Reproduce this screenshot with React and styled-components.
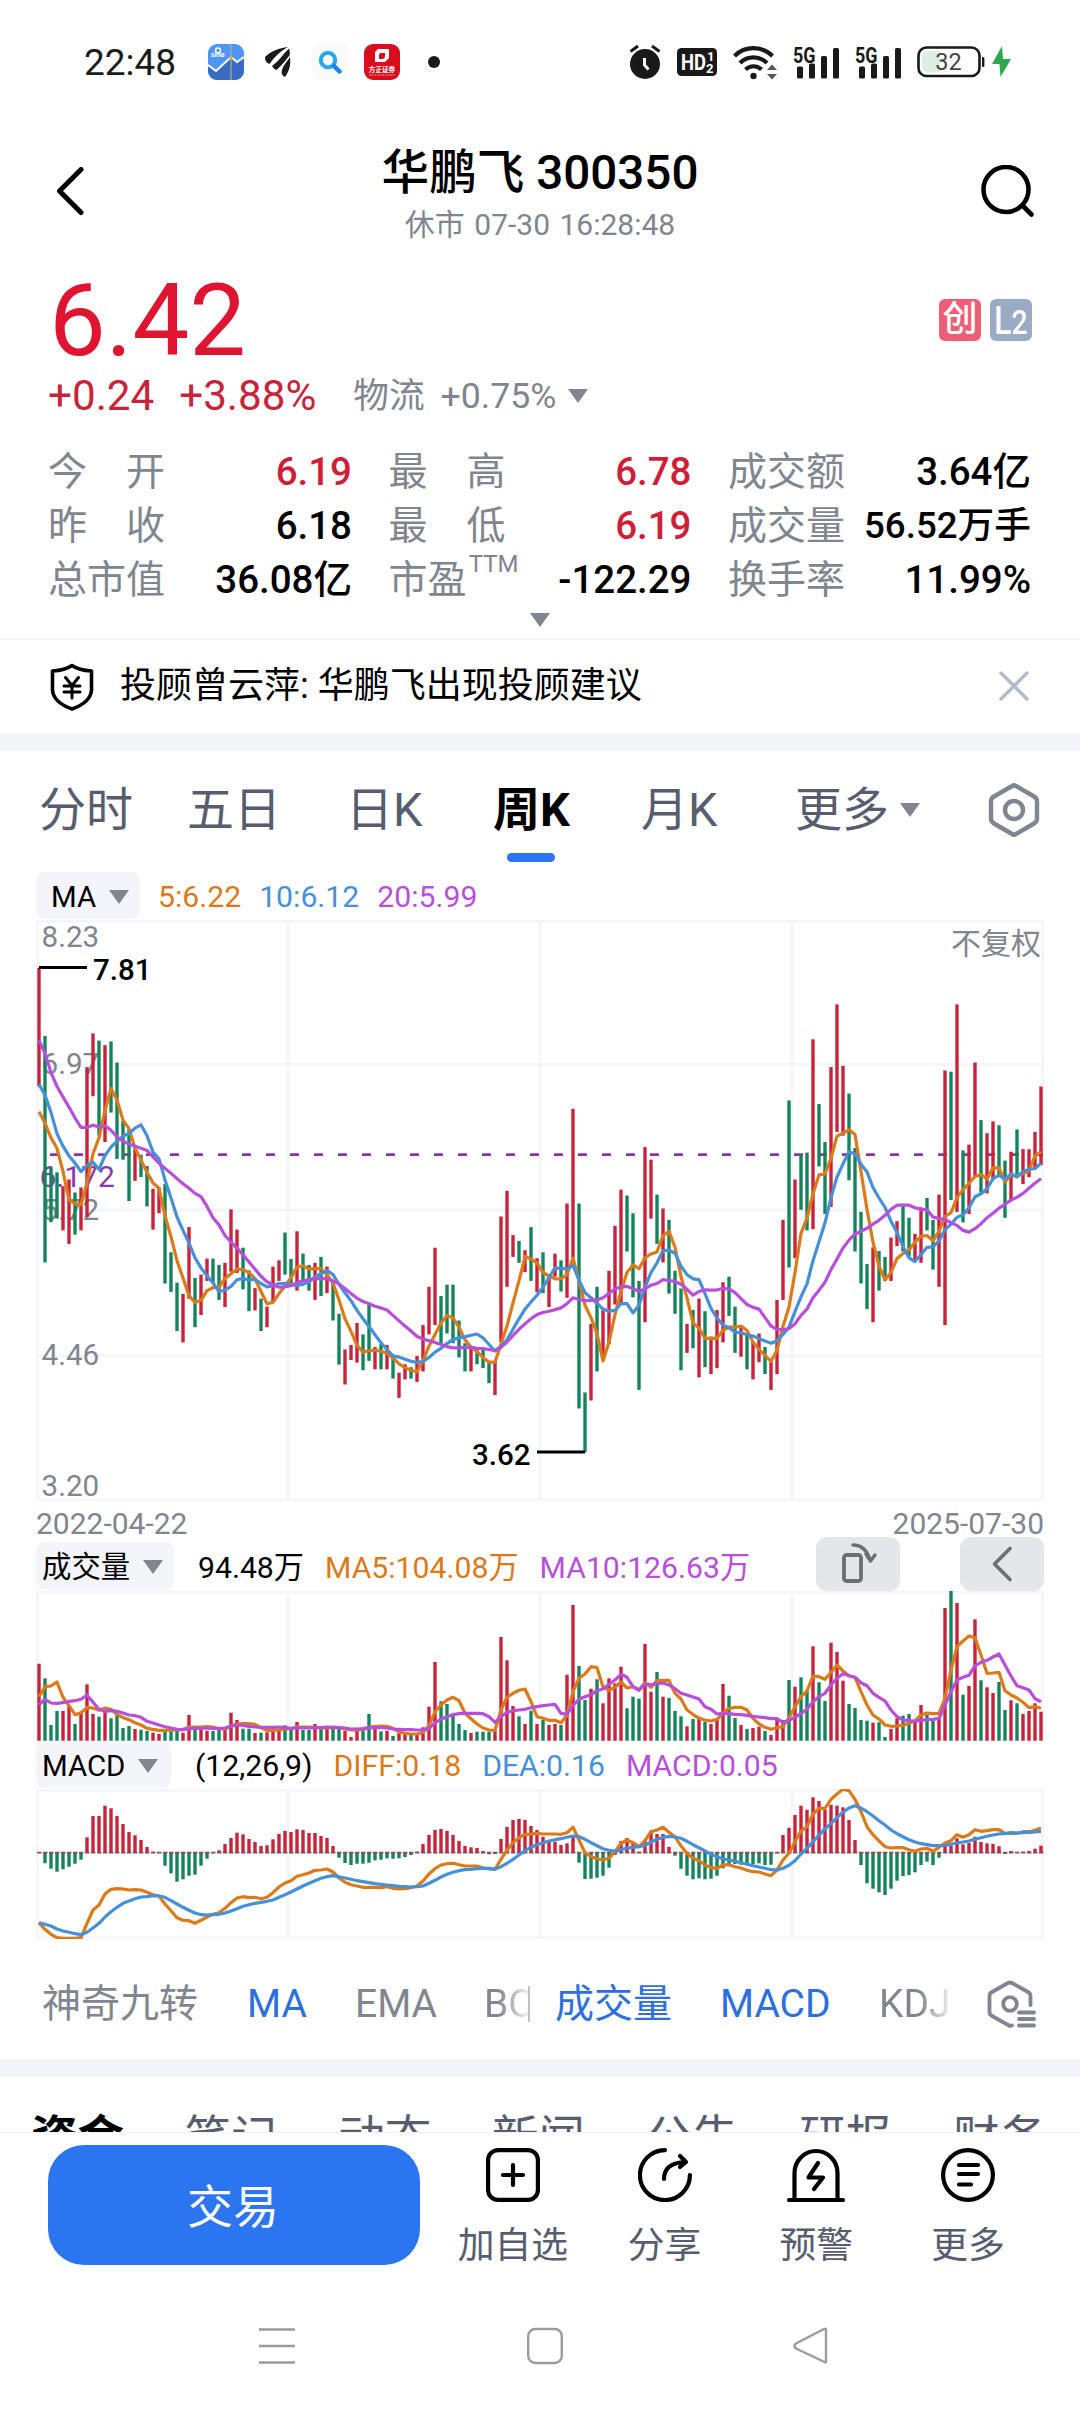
import React from 'react';
import styled, { createGlobalStyle } from 'styled-components';

const GlobalStyle = createGlobalStyle`
  * { box-sizing: border-box; }
  body {
    margin: 0;
    background: #fff;
    font-family: Roboto, "Noto Sans CJK SC", sans-serif;
    color: #000;
  }
  svg { display: block; flex: none; }
`;

const RED = '#c8233a';
const GREEN = '#15835c';
const ORANGE = '#dc7a1a';
const BLUE = '#4590d8';
const PURPLE = '#b84fdc';
const GRAY = '#81858f';
const GRID = '#f4f5f9';

/* ---------- market data ---------- */

const CANDLES = `R256-538 G418-956 G730-860 G742-852 R775-880 R759-912 G790-890 R778-880 R492-848 R412-561
G429-655 R440-670 G431-600 G481-710 G620-712 G640-810 R685-762 G700-753 G727-823 R781-878
R778-839 G770-1006 G932-1026 G1004-1119 R1031-1146 R872-1042 G993-1110 R985-1081 R947-1000 G947-1005
G962-1045 R957-1062 R830-978 R878-981 G921-1020 G975-1072 R1017-1070 G1042-1119 R1061-1110 R966-1050
R951-1000 G885-985 G948-1005 R882-1023 G935-1000 G962-1023 R957-1045 G943-1036 R966-1029 G1000-1094
G1078-1199 R1163-1246 R1152-1188 R1100-1194 G1127-1212 G1056-1190 R1157-1210 G1150-1210 R1152-1210 G1178-1232
R1218-1278 R1198-1234 G1205-1232 R1178-1240 R1105-1215 R1014-1127 R921-1105 G1036-1150 G1009-1125 G1009-1148
G1094-1182 G1148-1215 R1157-1215 G1165-1198 G1160-1207 G1192-1243 R1190-1271 R847-1145 R786-1014 R891-943
G905-957 R927-979 G872-1000 R946-1027 G932-1029 R990-1062 R935-990 G951-1025 R816-1040 R591-945
G816-1303 G1265-1407 R1102-1284 G1014-1215 R1070-1185 R976-1150 R869-1056 R783-1055 G797-930 G839-1039
G1000-1259 R682-1098 R712-852 G795-912 R828-956 G855-1030 G976-1078 G1018-1212 R1102-1171 G1069-1160
R1042-1229 G1072-1205 R1132-1221 R1069-1207 R1003-1146 G990-1083 G1061-1171 R1105-1180 G1125-1210 R1145-1234
R1125-1193 G1157-1221 R1185-1259 R1045-1221 R855-1045 G571-968 R759-946 G700-831 G695-880 R426-877
G580-728 G670-841 R492-824 R343-646 R489-655 G555-761 G684-930 G836-1006 G960-1067 R920-1098
G929-1023 G943-1000 R897-1000 R858-917 G822-930 G850-942 R888-953 R825-957 G803-880 G855-973
R795-1014 R500-1105 G503-808 R343-836 G690-861 R676-841 R481-752 G618-790 R649-792 R621-760
G630-750 G714-850 R693-808 G640-752 R687-770 R687-753 R646-735 R538-725`
  .split(/\s+/)
  .map((s) => {
    const [top, bottom] = s.slice(1).split('-').map(Number);
    return { color: s[0] === 'R' ? RED : GREEN, top, bottom };
  });

const nums = (s) => s.trim().split(/\s+/).map(Number);

const MA5 = nums(`598 625 660 685 740 808 816 819 768 698 660 595 543 570 618 638 684 713 742 767
780 845 895 952 993 1035 1051 1046 1023 1016 1015 994 983 972 973 980 995 1025 1054 1051
1030 1012 992 967 964 972 971 971 985 1005 1045 1090 1120 1153 1169 1166 1164 1167 1172 1183
1197 1206 1212 1216 1190 1155 1127 1100 1082 1088 1110 1140 1157 1168 1182 1193 1193 1150 1107 1052
1000 942 948 957 980 988 995 995 985 946 1000 1058 1087 1125 1190 1145 1080 1025 980 962
971 945 936 931 892 882 920 990 1040 1100 1112 1136 1137 1136 1117 1110 1110 1107 1118 1145
1163 1177 1191 1165 1108 1062 980 887 850 793 748 746 708 656 649 641 652 740 830 908
965 998 980 947 935 926 908 894 892 905 882 847 838 802 783 768 752 747 758 732
731 765 748 750 745 738 703 693`);

const MA10 = nums(`533 558 600 650 680 703 720 740 726 718 735 702 682 668 656 650 637 629 655 694
710 760 803 848 880 910 945 969 988 1005 1025 1022 1013 997 994 998 996 1006 1014 1012
1006 1006 1009 1011 1008 1002 990 983 975 985 1008 1028 1047 1070 1090 1108 1128 1147 1163 1178
1181 1186 1191 1194 1191 1182 1169 1160 1149 1139 1135 1133 1129 1126 1135 1151 1166 1155 1140 1115
1090 1067 1050 1034 1015 992 969 971 971 963 998 1028 1040 1053 1067 1072 1070 1054 1054 1076
1058 1015 980 957 928 927 934 965 985 995 997 1030 1065 1088 1105 1111 1122 1123 1128 1131
1137 1143 1148 1142 1127 1110 1073 1038 1007 952 907 862 802 753 722 693 698 723 741 778
803 825 858 885 918 945 954 937 920 919 905 878 865 849 843 826 800 793 781 757
749 758 746 753 740 735 733 720`);

const MA20 = nums(`428 460 505 538 563 587 613 635 635 630 634 631 642 658 668 675 680 685 690 705
720 733 744 757 769 780 792 800 823 850 867 892 908 922 938 955 972 989 1002 1009
1015 1014 1011 1004 1000 997 995 994 995 1000 1007 1018 1030 1041 1049 1054 1060 1064 1069 1082
1095 1107 1119 1132 1138 1142 1146 1151 1156 1159 1159 1158 1158 1160 1161 1163 1166 1158 1145 1130
1115 1102 1090 1080 1075 1072 1068 1064 1054 1040 1044 1047 1046 1045 1040 1030 1019 1014 1013 1018
1025 1019 1010 1006 997 999 1001 1008 1020 1034 1025 1021 1022 1021 1018 1019 1028 1042 1056 1063
1067 1087 1107 1115 1116 1113 1102 1082 1067 1040 1022 1003 973 948 922 903 889 882 875 865
856 844 830 820 820 820 826 830 831 848 852 853 862 868 880 884 876 864 850 839
827 818 808 801 792 780 768 757`);

const VOLUME = nums(`491 535 675 633 633 615 672 640 553 642 650 630 655 645 684 678 687 689 693 698
702 688 690 692 698 645 688 690 692 693 690 690 638 660 686 686 699 698 697 688
687 676 690 666 690 690 672 680 686 682 684 692 711 692 690 642 683 694 692 708
700 700 704 700 682 620 486 604 612 640 672 690 699 695 695 695 694 411 481 618
649 672 632 672 660 675 672 675 524 315 498 600 566 538 610 535 550 500 625 590
596 432 575 516 590 594 633 649 679 657 650 665 672 655 552 587 654 675 687 684
680 693 705 655 660 540 560 532 573 439 547 603 428 456 542 612 624 660 662 668
667 711 687 655 647 642 665 615 645 662 655 324 273 309 584 558 358 541 562 579
546 630 601 610 642 633 610 635`);

const VOL_MA5 = nums(`590 560 558 546 592 617 644 638 623 624 631 624 628 643 653 659 668 675 685 688
691 691 690 690 688 682 681 681 680 681 687 687 678 672 671 671 673 683 691 691
690 687 686 681 681 681 682 684 684 682 683 687 690 690 689 682 680 678 679 685
696 700 702 702 697 677 636 615 600 592 602 640 656 672 684 690 691 630 592 580
571 567 605 650 655 661 661 668 645 575 535 522 500 503 560 571 562 546 564 560
570 548 562 542 541 541 580 597 630 643 655 660 663 658 640 625 622 622 630 655
672 682 688 683 680 653 620 590 573 528 530 538 517 495 513 527 532 575 615 645
657 675 679 678 676 670 662 645 639 641 641 595 510 440 423 408 413 465 520 519
517 572 585 594 607 623 620 625`);

const VOL_MA10 = nums(`614 598 609 610 608 604 602 598 585 607 628 634 632 634 639 645 647 652 664 669
675 680 684 688 689 686 685 685 684 685 685 684 679 675 676 679 681 682 682 682
681 683 685 684 684 684 683 683 681 682 683 684 687 687 686 683 682 683 684 687
688 689 689 690 690 686 668 658 650 644 641 640 640 640 641 650 667 650 637 632
630 628 623 620 617 615 613 640 643 616 598 590 584 572 567 553 540 523 532 560
570 552 554 551 549 555 566 580 585 591 597 620 628 642 640 641 643 644 646 649
651 653 656 656 668 661 652 640 628 605 590 580 555 535 521 527 532 548 557 580
592 603 630 650 660 662 664 661 659 658 655 615 575 540 532 526 497 487 481 471
462 495 528 557 563 570 596 605`);

const MACD = nums(`1056 1090 1106 1115 1108 1100 1091 1079 1012 948 948 917 925 948 972 996 1006 1020 1041 1055
1057 1097 1120 1145 1138 1127 1124 1097 1076 1058 1051 1032 1014 998 1003 1017 1026 1038 1036 1018
1002 993 996 988 990 999 999 1008 1014 1038 1073 1089 1095 1091 1091 1088 1081 1079 1075 1076
1075 1071 1065 1055 1032 1005 990 987 993 1005 1023 1038 1042 1044 1053 1063 1062 1017 981 960
957 960 978 990 1010 1020 1025 1035 1030 1008 1088 1137 1136 1133 1127 1103 1065 1023 1014 1030
1055 1020 992 1002 1002 1041 1067 1106 1127 1138 1135 1138 1136 1127 1105 1095 1092 1094 1094 1092
1090 1095 1094 1060 1005 983 945 917 929 892 903 930 914 917 922 960 1020 1095 1150 1166
1177 1185 1166 1142 1128 1125 1117 1095 1085 1095 1073 1038 1037 1015 1033 1029 1010 1026 1030 1032
1039 1062 1053 1058 1055 1053 1046 1037`);

const DIFF = nums(`1268 1288 1303 1313 1315 1315 1315 1313 1270 1230 1215 1182 1168 1166 1167 1170 1169 1170 1177 1184
1188 1212 1232 1253 1261 1262 1270 1261 1251 1243 1238 1225 1208 1194 1190 1193 1192 1196 1192 1178
1161 1149 1142 1129 1124 1119 1111 1110 1107 1116 1134 1147 1154 1158 1162 1162 1162 1163 1160 1165
1167 1166 1163 1158 1143 1122 1106 1095 1091 1090 1094 1098 1098 1098 1103 1107 1108 1078 1050 1028
1013 1003 1002 1000 1002 1002 1002 1003 998 982 1020 1058 1070 1076 1080 1075 1055 1030 1020 1028
1040 1022 995 990 982 997 1010 1038 1060 1075 1082 1095 1103 1105 1095 1094 1100 1104 1111 1115
1116 1122 1127 1110 1080 1060 1025 993 980 942 925 925 898 882 868 872 898 935 980 1004
1023 1040 1044 1043 1043 1049 1054 1047 1045 1054 1042 1029 1022 1004 1012 1004 989 994 992 989
989 1001 997 1000 995 995 991 984`);

const DEA = nums(`1268 1273 1278 1287 1293 1297 1301 1304 1297 1284 1270 1251 1235 1222 1210 1203 1196 1191 1190 1187
1188 1192 1202 1212 1222 1231 1239 1244 1245 1244 1243 1239 1233 1226 1219 1214 1210 1207 1204 1200
1192 1184 1176 1167 1158 1150 1142 1135 1130 1127 1130 1134 1138 1142 1145 1148 1151 1153 1155 1157
1159 1160 1161 1160 1158 1150 1141 1131 1123 1117 1112 1109 1108 1106 1105 1105 1107 1100 1090 1078
1065 1052 1042 1034 1028 1023 1019 1016 1012 1008 1010 1018 1028 1037 1046 1051 1053 1049 1044 1042
1040 1036 1026 1018 1012 1009 1011 1015 1024 1034 1043 1053 1063 1070 1077 1080 1084 1088 1093 1097
1101 1105 1109 1110 1105 1096 1082 1062 1045 1025 1005 987 970 953 937 924 917 924 935 948
962 975 990 1001 1010 1019 1026 1031 1034 1037 1037 1036 1033 1029 1026 1023 1018 1013 1009 1005
1002 1000 1000 999 998 997 996 994`);

/* Sample units to chart pixels, one scale for each pane. */
const priceY = (v) => (v - 142.5) / 2.3758;
const volumeY = (v) => (v - 273) / 3;
const macdY = (v) => (v - 867) / 3;
const barX = (i) => 3 + i * 6;

const points = (values, toY) =>
  values.map((v, i) => `${barX(i)},${toY(v).toFixed(1)}`).join(' ');

/* ---------- shared pieces ---------- */

const Screen = styled.div`
  width: 1080px;
  height: 2412px;
  overflow: hidden;
  display: flex;
  flex-direction: column;
  background: #fff;
`;

const Band = styled.div`
  flex: none;
  height: 18px;
  background: #f4f5fa;
`;

const Caret = styled.i`
  flex: none;
  width: 0;
  height: 0;
  margin-left: ${(p) => p.$gap || 0}px;
  border-left: 10.5px solid transparent;
  border-right: 10.5px solid transparent;
  border-top: 14px solid #81858f;
`;

/* ---------- status bar ---------- */

const StatusBar = styled.div`
  flex: none;
  height: 124px;
  padding: 0 67px 0 84px;
  display: flex;
  align-items: center;
  justify-content: space-between;
`;

const StatusGroup = styled.div`
  display: flex;
  align-items: center;
  gap: ${(p) => p.$gap}px;
`;

const Clock = styled.span`
  width: 103px;
  font-size: 37px;
  line-height: 40px;
  color: #1c1c1c;
  padding-top: 2px;
`;

const StockAppIcon = () => (
  <svg width="36" height="36" viewBox="0 0 36 36">
    <defs><clipPath id="stk"><rect width="36" height="36" rx="9" /></clipPath></defs>
    <g clipPath="url(#stk)">
      <rect width="36" height="36" fill="#5096f8" />
      <path d="M0 21l8 6 15-14 6 6 7-6v23H0z" fill="#386bc1" />
      <path d="M0 21l8 6 15-14 6 5 7-5" fill="none" stroke="#fff" strokeWidth="2" />
      <path d="M23 0v36" stroke="#b8a985" strokeWidth="1.2" />
      <circle cx="23" cy="14" r="1.8" fill="#f0a030" />
      <circle cx="10" cy="6.500" r="2.500" fill="none" stroke="#fff" strokeWidth="1.500" />
      <text x="3" y="13" fontSize="7.500" fontWeight="700" fontStyle="italic" fill="#fff">sina</text>
    </g>
  </svg>
);

const WingIcon = () => (
  <svg width="26" height="30" viewBox="0 0 26 30" fill="#191919">
    <path d="M0 10C6 4 14 1 23 0 16 4 10 9 4.500 17 2 16 0 14 0 10z" />
    <path d="M7 19C14 14 18 7 24 1.500c1 3 1 5 .5 7-4 5-8 10-13 14.500-2-1-3.500-2-4.500-4z" />
    <path d="M16.500 25.500c1-7 5-10 8.500-15.500 1 7-.5 14-5 20-2-1-3-2.500-3.500-4.500z" />
  </svg>
);

const FinderIcon = () => (
  <svg width="36" height="36" viewBox="0 0 36 36">
    <rect width="36" height="36" rx="8" fill="#fafafa" />
    <circle cx="16" cy="16" r="7.200" fill="none" stroke="#23a7ee" strokeWidth="4" />
    <path d="M22 22l5.500 5.500" stroke="#1b82ee" strokeWidth="4.500" strokeLinecap="round" />
  </svg>
);

const BrokerIcon = () => (
  <svg width="36" height="36" viewBox="0 0 36 36">
    <rect width="36" height="36" rx="9" fill="#d90d1c" />
    <path d="M14 5h11v9l-4 4H11V8z" fill="#fff" />
    <path d="M16 9h5v4l-2 2h-4v-4z" fill="#d90d1c" />
    <text x="18" y="28" fontSize="6.600" fontWeight="700" textAnchor="middle" fill="#fff">方正证券</text>
    <path d="M5 31h26" stroke="#f08a90" strokeWidth="1.200" strokeDasharray="2 .6" />
  </svg>
);

const AlarmIcon = () => (
  <svg width="32" height="36" viewBox="0 0 32 36">
    <circle cx="16" cy="20" r="15" fill="#191919" />
    <path d="M1.500 7.500L9 2M30.500 7.500L23 2" stroke="#191919" strokeWidth="3" />
    <path d="M15.500 14v7l4 4.500" fill="none" stroke="#fff" strokeWidth="3" />
  </svg>
);

const HdIcon = () => (
  <svg width="40" height="28" viewBox="0 0 40 28">
    <rect width="40" height="28" rx="4.500" fill="#191919" />
    <g fill="#fff" fontWeight="700">
      <text x="4" y="22" fontSize="22" textLength="25" lengthAdjust="spacingAndGlyphs">HD</text>
      <text x="30" y="13" fontSize="13">1</text>
      <text x="29" y="25" fontSize="13">2</text>
    </g>
  </svg>
);

const WifiIcon = () => (
  <svg width="44" height="35" viewBox="0 0 44 35">
    <g fill="none" stroke="#191919" strokeWidth="4.200">
      <path d="M1.500 11a27 27 0 0 1 38 0" />
      <path d="M7 18a19 19 0 0 1 27 0" />
      <path d="M12.500 24.500a11.500 11.500 0 0 1 16 0" />
    </g>
    <circle cx="20.500" cy="31" r="3.200" fill="#191919" />
    <path d="M34 25l5-5.500 5 5.500zM34 29l5 5.500 5-5.500z" fill="#555" />
  </svg>
);

const SignalIcon = () => (
  <svg width="46" height="41" viewBox="0 -4 46 41" fill="#191919">
    <text x="0" y="16.500" fontSize="21.500" fontWeight="700" textLength="22.500" lengthAdjust="spacingAndGlyphs">5G</text>
    <rect x="4" y="20.500" width="6" height="12" rx="1.500" />
    <rect x="16" y="17.500" width="6" height="15" rx="1.500" />
    <rect x="28" y="10" width="6" height="22.500" rx="1.500" />
    <rect x="40" y="2" width="6" height="30.500" rx="1.500" />
  </svg>
);

const BatteryIcon = () => (
  <svg width="96" height="32" viewBox="0 0 96 32">
    <rect x="1.500" y="1.500" width="61" height="28.500" rx="8" fill="#fff" stroke="#191919" strokeWidth="2.600" />
    <path d="M11 5h12v21.500H11a6 6 0 0 1-6-6v-9.500a6 6 0 0 1 6-6z" fill="#dcefe1" />
    <rect x="65" y="11" width="2.400" height="10" rx="1" fill="#191919" />
    <text x="31.500" y="24.300" fontSize="23.500" textAnchor="middle" fill="#444">32</text>
    <path d="M85 0L75 18h7.500l1 13L94 13h-8z" fill="#2fa84a" />
  </svg>
);

/* ---------- header ---------- */

const Header = styled.header`
  flex: none;
  height: 136px;
  padding: 0 45px 0 55px;
  display: grid;
  grid-template-columns: 54px 1fr 54px;
  align-items: center;
`;

const Heading = styled.div`
  text-align: center;
  padding: 6px 10px 0 0;
`;

const Title = styled.h1`
  margin: 0;
  font-size: 47.600px;
  line-height: 56px;
  font-weight: 500;
`;

const Subtitle = styled.div`
  font-size: 30px;
  line-height: 40px;
  margin-top: 4px;
  color: #81858f;
  word-spacing: 2px;
`;

/* ---------- quote ---------- */

const Quote = styled.section`
  flex: none;
  height: 378px;
  padding: 0 48px;
`;

const PriceRow = styled.div`
  height: 110px;
  display: flex;
  align-items: center;
  justify-content: space-between;
`;

const Price = styled.span`
  margin: 12px 0 0 1px;
  font-size: 101px;
  line-height: 100px;
  color: #de1430;
`;

const Badges = styled.div`
  display: flex;
  gap: 9px;
  margin-top: 10px;
`;

const Badge = styled.span`
  width: 42px;
  height: 42px;
  border-radius: 6px;
  background: ${(p) => p.$bg};
  color: #fff;
  font-size: ${(p) => p.$size}px;
  font-weight: 500;
  line-height: ${(p) => p.$line || 40}px;
  display: flex;
  justify-content: center;
`;

const Narrow = styled.span`
  transform: scaleX(0.84);
  small { font-size: 34px; }
`;

const ChangeRow = styled.div`
  height: 52px;
  display: flex;
  align-items: center;
  line-height: 52px;
`;

const Change = styled.span`
  font-size: 42.200px;
  color: #c8233a;
  margin-right: ${(p) => p.$gap}px;
`;

const Sector = styled.span`
  font-size: 35.700px;
  color: #81858f;
  word-spacing: 7px;
  display: flex;
  align-items: center;
`;

const Stats = styled.dl`
  margin: 23px 0 0;
  display: grid;
  grid-template-columns: 304px 303px 303px;
  column-gap: 36.500px;
  grid-auto-rows: 54px;
`;

const Stat = styled.div`
  display: flex;
  justify-content: space-between;
  align-items: center;
  white-space: nowrap;
`;

const StatLabel = styled.dt`
  width: 117px;
  display: flex;
  justify-content: space-between;
  font-size: 39px;
  line-height: 54px;
  color: #81858f;
  sup {
    font-size: 24px;
    line-height: 24px;
    margin: -1px -13px 0 0;
  }
`;

const StatValue = styled.dd`
  margin: 0;
  font-size: ${(p) => (p.$long ? 36.700 : 38.500)}px;
  line-height: 54px;
  font-weight: 500;
  color: ${(p) => (p.$up ? '#d01e38' : '#000')};
`;

const ExpandRow = styled.div`
  display: flex;
  justify-content: center;
  margin-top: 6px;
`;

/* ---------- notice ---------- */

const Notice = styled.section`
  flex: none;
  height: 95px;
  border-top: 2px solid #f4f5f9;
  padding: 0 50px 0 49px;
  display: flex;
  align-items: center;
`;

const NoticeText = styled.span`
  flex: 1;
  margin-left: 25px;
  font-size: 36px;
  line-height: 48px;
  padding-bottom: 2px;
`;

/* ---------- period tabs ---------- */

const PeriodTabs = styled.nav`
  flex: none;
  height: 118px;
  padding: 0 39px;
  display: flex;
  align-items: stretch;
`;

const PeriodTab = styled.span`
  flex: none;
  width: ${(p) => p.$w}px;
  font-size: 47px;
  line-height: 118px;
  color: ${(p) => (p.$active ? '#000' : '#575d6f')};
  font-weight: ${(p) => (p.$active ? 700 : 400)};
  display: flex;
  align-items: center;
`;

const ActiveLabel = styled.span`
  position: relative;
  &::after {
    content: '';
    position: absolute;
    left: 50%;
    margin-left: -24px;
    bottom: 7px;
    width: 48px;
    height: 9px;
    border-radius: 5px;
    background: #2c75f0;
  }
`;

const TabIcon = styled.span`
  display: flex;
  align-items: center;
  margin-left: auto;
`;

/* ---------- charts ---------- */

const ChartArea = styled.section`
  flex: none;
  padding: 0 36px;
`;

const Legend = styled.div`
  height: ${(p) => p.$h}px;
  display: flex;
  align-items: flex-end;
  font-size: 30.200px;
  line-height: 46px;
  white-space: nowrap;
`;

const Picker = styled.span`
  width: ${(p) => p.$w}px;
  height: ${(p) => p.$h || 47}px;
  margin-bottom: 1px;
  padding: 2px 0 0 ${(p) => p.$pad}px;
  border-radius: 8px;
  background: #f4f5fa;
  font-size: 29.400px;
  display: flex;
  align-items: center;
`;

const LegendValue = styled.span`
  color: ${(p) => p.$color || '#000'};
  margin-left: ${(p) => p.$gap}px;
`;

const ChartButton = styled.button`
  width: 84px;
  height: 54px;
  margin: 0 0 0 ${(p) => p.$gap};
  padding: 0;
  flex: none;
  border: 0;
  border-radius: 11px;
  background: #e5e6ea;
  display: flex;
  align-items: center;
  justify-content: center;
`;

const Dates = styled.div`
  height: 40px;
  display: flex;
  justify-content: space-between;
  font-size: 30px;
  line-height: 46px;
  color: #81858f;
`;

const Frame = ({ h, rows = [] }) => (
  <g stroke={GRID} strokeWidth="2.800" fill="none">
    <rect x="1.250" y="1.250" width="1005.500" height={h - 2.5} />
    {[252, 504, 756].map((x) => <path key={x} d={`M${x} 0V${h}`} />)}
    {rows.map((y) => <path key={y} d={`M0 ${y}H1008`} />)}
  </g>
);

const Curve = ({ values, toY, color }) => (
  <polyline points={points(values, toY)} fill="none" stroke={color} strokeWidth="3.200" strokeLinejoin="round" />
);

const PriceChart = () => (
  <svg width="1008" height="581" viewBox="0 0 1008 581">
    <Frame h={581} rows={[144.4, 290, 435.6]} />
    <g fontSize="29.600" fill={GRAY}>
      <text x="5.500" y="27">8.23</text>
      <text x="5.500" y="153.500">6.97</text>
      <text x="5.500" y="300">5.72</text>
      <text x="5.500" y="445">4.46</text>
      <text x="5.500" y="575.500">3.20</text>
      <text x="1005" y="34" fontSize="30" textAnchor="end">不复权</text>
      <text x="3.500" y="266.500" fontSize="30" fill="#8a3aa8">6.172</text>
    </g>
    <path d="M14 234.600H1008" stroke="#8c35ab" strokeWidth="2.800" strokeDasharray="9 15" />
    {CANDLES.map((c, i) => (
      <path key={i} d={`M${barX(i)} ${priceY(c.top).toFixed(1)}V${priceY(c.bottom).toFixed(1)}`} stroke={c.color} strokeWidth="3.400" />
    ))}
    <Curve values={MA5} toY={priceY} color={ORANGE} />
    <Curve values={MA10} toY={priceY} color={BLUE} />
    <Curve values={MA20} toY={priceY} color={PURPLE} />
    <path d="M3 47.500H51M501 532H549" stroke="#000" strokeWidth="3" />
    <g fontSize="29.500" fontWeight="500">
      <text x="57" y="60">7.81</text>
      <text x="436" y="545">3.62</text>
    </g>
  </svg>
);

const VolumeChart = () => (
  <svg width="1008" height="150" viewBox="0 0 1008 150">
    <Frame h={150} />
    {VOLUME.map((v, i) => (
      <path key={i} d={`M${barX(i)} 149.700V${volumeY(v).toFixed(1)}`} stroke={CANDLES[i].color} strokeWidth="3.400" />
    ))}
    <Curve values={VOL_MA5} toY={volumeY} color={ORANGE} />
    <Curve values={VOL_MA10} toY={volumeY} color={PURPLE} />
  </svg>
);

const MacdChart = () => (
  <svg width="1008" height="150" viewBox="0 0 1008 150">
    <Frame h={150} />
    {MACD.map((v, i) => (
      <path key={i} d={`M${barX(i)} 63.700V${macdY(v).toFixed(1)}`} stroke={v < 1058 ? RED : GREEN} strokeWidth="3.400" />
    ))}
    <path d="M1 63.700H1008" stroke="#85505a" strokeWidth="1.800" strokeDasharray="4.500 1.500" />
    <Curve values={DIFF} toY={macdY} color={ORANGE} />
    <Curve values={DEA} toY={macdY} color={BLUE} />
  </svg>
);

/* ---------- indicator row ---------- */

const Indicators = styled.div`
  flex: none;
  height: 120px;
  padding: 9px 43px 0 42px;
  display: flex;
  align-items: center;
  font-size: 39px;
  line-height: 50px;
  white-space: nowrap;
`;

const Indicator = styled.span`
  flex: none;
  width: ${(p) => p.$w}px;
  overflow: hidden;
  color: ${(p) => (p.$on ? '#2c70e0' : '#81858f')};
  ${(p) => p.$fade && `
    -webkit-mask-image: linear-gradient(90deg, #000 ${p.$fade}px, rgba(0,0,0,.12) 100%);
    mask-image: linear-gradient(90deg, #000 ${p.$fade}px, rgba(0,0,0,.12) 100%);
  `}
`;

const IndicatorRule = styled.i`
  flex: none;
  width: 2px;
  height: 36px;
  margin-right: 25px;
  background: #bfc2cb;
`;

const IndicatorIcon = styled.span`
  margin-left: auto;
`;

/* ---------- section tabs ---------- */

const SectionTabs = styled.nav`
  flex: none;
  height: 55px;
  padding: 0 34px 0 31px;
  overflow: hidden;
  display: flex;
  justify-content: space-between;
`;

const SectionTab = styled.span`
  font-size: 46.500px;
  line-height: 122px;
  font-weight: ${(p) => (p.$active ? 700 : 400)};
  color: ${(p) => (p.$active ? '#000' : '#575d6f')};
`;

/* ---------- bottom bar ---------- */

const ActionBar = styled.footer`
  flex: none;
  height: 150px;
  border-top: 1px solid #f0f1f4;
  padding: 12px 36px 0 48px;
  display: flex;
  align-items: flex-start;
`;

const TradeButton = styled.button`
  flex: none;
  width: 372px;
  height: 120px;
  margin-right: 17px;
  border: 0;
  border-radius: 36px;
  background: #2c75f0;
  color: #fff;
  font-family: inherit;
  font-size: 46px;
  line-height: 60px;
  padding: 4px 2px 0 0;
`;

const Action = styled.span`
  flex: 1;
  display: flex;
  flex-direction: column;
  align-items: center;
  padding-top: 3px;
  font-size: 36.800px;
  line-height: 48px;
  gap: 20px;
  color: #575d6f;
`;

const NavBar = styled.div`
  flex: none;
  height: 128px;
  padding: 0 251px 0 258px;
  display: flex;
  align-items: center;
  justify-content: space-between;
`;

const ActionSvg = ({ w = 54, children }) => (
  <svg width={w} height="54" viewBox={`0 0 ${w} 54`} fill="none" stroke="#000" strokeWidth="4.200" strokeLinecap="round" strokeLinejoin="round">
    {children}
  </svg>
);

const STATS = [
  ['今开', '6.19', true], ['最高', '6.78', true], ['成交额', '3.64亿'],
  ['昨收', '6.18'], ['最低', '6.19', true], ['成交量', '56.52万手'],
  ['总市值', '36.08亿'], ['市盈', '-122.29', false, 'TTM'], ['换手率', '11.99%'],
];

export default function App() {
  return (
    <Screen>
      <GlobalStyle />
      <StatusBar>
        <StatusGroup $gap={21}>
          <Clock>22:48</Clock>
          <StockAppIcon />
          <WingIcon />
          <StatusGroup $gap={16}>
            <FinderIcon />
            <StatusGroup $gap={28}>
              <BrokerIcon />
              <svg width="12" height="12"><circle cx="6" cy="6" r="6" fill="#191919" /></svg>
            </StatusGroup>
          </StatusGroup>
        </StatusGroup>
        <StatusGroup $gap={16}>
          <AlarmIcon />
          <HdIcon />
          <WifiIcon />
          <SignalIcon />
          <SignalIcon />
          <BatteryIcon />
        </StatusGroup>
      </StatusBar>

      <Header>
        <svg width="30" height="50" viewBox="0 0 30 50" fill="none" stroke="#000" strokeWidth="5" strokeLinecap="round" strokeLinejoin="round">
          <path d="M26 2.500L4.500 24 26 45.500" />
        </svg>
        <Heading>
          <Title>华鹏飞 300350</Title>
          <Subtitle>休市 07-30 16:28:48</Subtitle>
        </Heading>
        <svg width="54" height="54" viewBox="0 0 54 54" fill="none" stroke="#000" strokeWidth="4.600" strokeLinecap="round">
          <circle cx="25" cy="24.500" r="22.500" />
          <path d="M42 41l8.500 8.500" />
        </svg>
      </Header>

      <Quote>
        <PriceRow>
          <Price>6.42</Price>
          <Badges>
            <Badge $bg="#ee5d76" $size={35} $line={41}>创</Badge>
            <Badge $bg="#9babc4" $size={38} $line={44}><Narrow>L<small>2</small></Narrow></Badge>
          </Badges>
        </PriceRow>
        <ChangeRow>
          <Change $gap={25}>+0.24</Change>
          <Change $gap={37}>+3.88%</Change>
          <Sector>物流 +0.75%<Caret $gap={11} /></Sector>
        </ChangeRow>
        <Stats>
          {STATS.map(([label, value, up, sup]) => (
            <Stat key={label}>
              <StatLabel>
                {sup ? <span>{label}</span> : [...label].map((ch) => <span key={ch}>{ch}</span>)}
                {sup && <sup>{sup}</sup>}
              </StatLabel>
              <StatValue $up={up} $long={value.length > 6 && value.endsWith('手')}>{value}</StatValue>
            </Stat>
          ))}
        </Stats>
        <ExpandRow><Caret /></ExpandRow>
      </Quote>

      <Notice>
        <svg width="46" height="48" viewBox="0 0 46 48" fill="none" stroke="#000" strokeWidth="3.600" strokeLinejoin="round" strokeLinecap="round">
          <path d="M23 2.500c5 3.500 11 5 19.500 5.500v19C42 36 34 42 23 46 12 42 4 36 3.500 27V8C12 7.500 18 6 23 2.500z" />
          <path d="M16.500 14.500l6.500 8 6.500-8M15 23h16M15 29h16M23 23v12" strokeWidth="3" />
        </svg>
        <NoticeText>投顾曾云萍: 华鹏飞出现投顾建议</NoticeText>
        <svg width="32" height="32" viewBox="0 0 32 32" stroke="#b3bac8" strokeWidth="3.400" strokeLinecap="round">
          <path d="M3 2l26 26M29 2L3 28" />
        </svg>
      </Notice>
      <Band />

      <PeriodTabs>
        <PeriodTab $w={148}>分时</PeriodTab>
        <PeriodTab $w={159}>五日</PeriodTab>
        <PeriodTab $w={147}>日K</PeriodTab>
        <PeriodTab $w={148} $active><ActiveLabel>周K</ActiveLabel></PeriodTab>
        <PeriodTab $w={154}>月K</PeriodTab>
        <PeriodTab $w={140}>更多<Caret $gap={11} /></PeriodTab>
        <TabIcon>
          <svg width="54" height="58" viewBox="0 0 54 58" fill="none" stroke="#81858f" strokeWidth="4.400" strokeLinejoin="round">
            <path d="M28 4.500l19 11q3 1.800 3 5v17q0 3.200-3 5l-19 11q-1 .6-2 0l-19-11q-3-1.800-3-5v-17q0-3.200 3-5l19-11q1-.6 2 0z" />
            <circle cx="27" cy="29" r="9" />
          </svg>
        </TabIcon>
      </PeriodTabs>

      <ChartArea>
        <Legend $h={51}>
          <Picker $w={104} $pad={15}>MA<Caret $gap={13} /></Picker>
          <LegendValue $gap={18} $color={ORANGE}>5:6.22</LegendValue>
          <LegendValue $gap={18} $color={BLUE}>10:6.12</LegendValue>
          <LegendValue $gap={18} $color={PURPLE}>20:5.99</LegendValue>
        </Legend>
        <PriceChart />
        <Dates><span>2022-04-22</span><span>2025-07-30</span></Dates>
        <Legend $h={50}>
          <Picker $w={138} $pad={6} $h={48}>成交量<Caret $gap={13} /></Picker>
          <LegendValue $gap={24}>94.48万</LegendValue>
          <LegendValue $gap={21} $color={ORANGE}>MA5:104.08万</LegendValue>
          <LegendValue $gap={21} $color={PURPLE}>MA10:126.63万</LegendValue>
          <ChartButton $gap="auto">
            <svg width="40" height="44" viewBox="0 0 40 44" fill="none" stroke="#6d6e72" strokeWidth="3.800" strokeLinecap="round" strokeLinejoin="round">
              <rect x="6" y="13" width="17" height="26" rx="2.500" />
              <path d="M15 3c8 0 14 5 17 15M28 12l4.500 7L37 13" strokeWidth="3.400" />
            </svg>
          </ChartButton>
          <ChartButton $gap="60px">
            <svg width="20" height="36" viewBox="0 0 20 36" fill="none" stroke="#6d6e72" strokeWidth="3.600" strokeLinecap="round" strokeLinejoin="round">
              <path d="M18 2.500L2.500 18 18 33.500" />
            </svg>
          </ChartButton>
        </Legend>
        <VolumeChart />
        <Legend $h={48}>
          <Picker $w={135} $pad={6}>MACD<Caret $gap={13} /></Picker>
          <LegendValue $gap={24}>(12,26,9)</LegendValue>
          <LegendValue $gap={21} $color={ORANGE}>DIFF:0.18</LegendValue>
          <LegendValue $gap={21} $color={BLUE}>DEA:0.16</LegendValue>
          <LegendValue $gap={21} $color={PURPLE}>MACD:0.05</LegendValue>
        </Legend>
        <MacdChart />
      </ChartArea>

      <Indicators>
        <Indicator $w={205}>神奇九转</Indicator>
        <Indicator $w={108} $on>MA</Indicator>
        <Indicator $w={129}>EMA</Indicator>
        <Indicator $w={44} $fade={14}>BOLL</Indicator>
        <IndicatorRule />
        <Indicator $w={165} $on>成交量</Indicator>
        <Indicator $w={159} $on>MACD</Indicator>
        <Indicator $w={72} $fade={40}>KDJ</Indicator>
        <IndicatorIcon>
          <svg width="50" height="48" viewBox="0 0 50 48" fill="none" stroke="#81858f" strokeWidth="3.800" strokeLinecap="round" strokeLinejoin="round">
            <path d="M25 45.500l-2 .5-18-10q-2.500-1.500-2.500-4V16q0-2.500 2.500-4L21 3q2-1 4 0l16 9q2.500 1.500 2.500 4v9" />
            <circle cx="23" cy="24" r="6.800" />
            <path d="M32 32.500h15M32 39h15M32 45.500h15" />
          </svg>
        </IndicatorIcon>
      </Indicators>
      <Band />

      <SectionTabs>
        {['资金', '笔记', '动态', '新闻', '公告', '研报', '财务'].map((t, i) => (
          <SectionTab key={t} $active={i === 0}>{t}</SectionTab>
        ))}
      </SectionTabs>

      <ActionBar>
        <TradeButton>交易</TradeButton>
        <Action>
          <ActionSvg>
            <rect x="2.100" y="2.100" width="49.800" height="49.800" rx="10" />
            <path d="M17 27h20M27 17v20" />
          </ActionSvg>
          加自选
        </Action>
        <Action>
          <ActionSvg>
            <path d="M27 2.100A25 25 0 1 0 51.900 27" />
            <path d="M26 31C26 21 32 15 46 14M42 8l6 6-6 5" />
          </ActionSvg>
          分享
        </Action>
        <Action>
          <ActionSvg w={58}>
            <path d="M7.500 52V25a21.500 22 0 0 1 43 0v27M2.100 52h53.800" />
            <path d="M31 15L21.500 29.500H36L27 41" />
          </ActionSvg>
          预警
        </Action>
        <Action>
          <ActionSvg>
            <circle cx="27" cy="27" r="24.900" />
            <path d="M18 17h19M18 26h19M18 36.500h12" />
          </ActionSvg>
          更多
        </Action>
      </ActionBar>

      <NavBar>
        <svg width="38" height="38" viewBox="0 0 38 38" stroke="#9b9b9b" strokeWidth="2.600">
          <path d="M1 2.500h36M1 19h36M1 35.500h36" />
        </svg>
        <svg width="36" height="38" viewBox="0 0 36 38" fill="none" stroke="#9b9b9b" strokeWidth="2.400">
          <rect x="1.200" y="2" width="33.600" height="34" rx="7" />
        </svg>
        <svg width="36" height="38" viewBox="0 0 36 38" fill="none" stroke="#9b9b9b" strokeWidth="2.400" strokeLinejoin="round">
          <path d="M33 2.500v32q0 1.500-1.500.5L3 21.500q-3-2.500 0-5L31 2q2-.8 2 .5z" />
        </svg>
      </NavBar>
    </Screen>
  );
}
